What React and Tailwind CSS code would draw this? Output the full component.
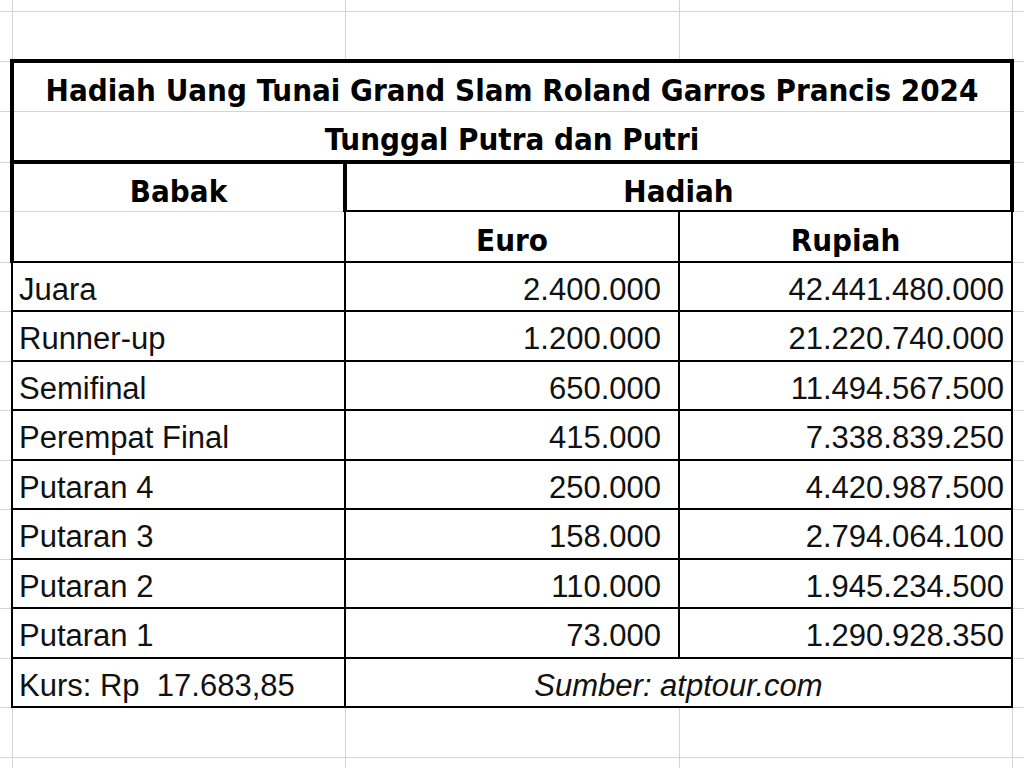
import React from 'react';

const grid = "border border-[#d4d4d4]";
const head = "font-bold text-[31px] text-center text-black pt-[8px]";
const data = "text-[31px] text-[#111] pt-[5px]";
const headFont = { fontFamily: '"DejaVu Sans Condensed", "Open Sans", sans-serif' };

const rows = [
    ["Juara", "2.400.000", "42.441.480.000"],
    ["Runner-up", "1.200.000", "21.220.740.000"],
    ["Semifinal", "650.000", "11.494.567.500"],
    ["Perempat Final", "415.000", "7.338.839.250"],
    ["Putaran 4", "250.000", "4.420.987.500"],
    ["Putaran 3", "158.000", "2.794.064.100"],
    ["Putaran 2", "110.000", "1.945.234.500"],
    ["Putaran 1", "73.000", "1.290.928.350"],
];

const rowHeights = ["h-[49px]", "h-[50px]", "h-[49px]", "h-[50px]", "h-[49px]", "h-[50px]", "h-[49px]", "h-[50px]"];

const EdgeL = () => <td className="border-y border-r border-[#d4d4d4]" />;
const EdgeR = () => <td className="border-y border-l border-[#d4d4d4]" />;

const EmptyRow = ({ h }) => (
    <tr className={h}>
        <EdgeL />
        <td className={grid} />
        <td className={grid} />
        <td className={grid} />
        <EdgeR />
    </tr>
);

const App = () => {
    return (
        <div className="w-[1024px] h-[768px] overflow-hidden bg-white" style={{ fontFamily: '"Liberation Sans", Arial, sans-serif' }}>
            <table className="w-[1024px] table-fixed border-collapse leading-none">
                <colgroup>
                    <col className="w-[12px]" />
                    <col className="w-[333px]" />
                    <col className="w-[334px]" />
                    <col className="w-[333px]" />
                    <col className="w-[12px]" />
                </colgroup>
                <tbody>
                    <tr className="h-[11px]">
                        <td className="border-r border-b border-[#d4d4d4]" />
                        <td className="border-x border-b border-[#d4d4d4]" />
                        <td className="border-x border-b border-[#d4d4d4]" />
                        <td className="border-x border-b border-[#d4d4d4]" />
                        <td className="border-l border-b border-[#d4d4d4]" />
                    </tr>
                    <EmptyRow h="h-[50px]" />

                    <tr className="h-[50px]">
                        <EdgeL />
                        <td colSpan={3} className={`border-t-4 border-x-4 border-b border-t-black border-x-black border-b-[#d4d4d4] ${head}`} style={headFont}>
                            Hadiah Uang Tunai Grand Slam Roland Garros Prancis 2024
                        </td>
                        <EdgeR />
                    </tr>

                    <tr className="h-[51px]">
                        <EdgeL />
                        <td colSpan={3} className={`border-t border-x-4 border-b-4 border-t-[#d4d4d4] border-x-black border-b-black ${head}`} style={headFont}>
                            Tunggal Putra dan Putri
                        </td>
                        <EdgeR />
                    </tr>

                    <tr className="h-[49px]">
                        <EdgeL />
                        <td className={`border-t-4 border-x-4 border-b border-t-black border-x-black border-b-[#d4d4d4] ${head}`} style={headFont}>
                            Babak
                        </td>
                        <td colSpan={2} className={`border-t-4 border-x-4 border-b-2 border-black ${head}`} style={headFont}>
                            Hadiah
                        </td>
                        <EdgeR />
                    </tr>

                    <tr className="h-[51px]">
                        <EdgeL />
                        <td className="border-t border-l-4 border-r-2 border-b-2 border-t-[#d4d4d4] border-l-black border-r-black border-b-black" />
                        <td className={`border-2 border-black ${head}`} style={headFont}>
                            Euro
                        </td>
                        <td className={`border-2 border-black ${head}`} style={headFont}>
                            Rupiah
                        </td>
                        <EdgeR />
                    </tr>

                    {rows.map(([babak, euro, rupiah], i) => (
                        <tr key={babak} className={rowHeights[i]}>
                            <EdgeL />
                            <td className={`border-2 border-black pl-[6px] ${data}`}>{babak}</td>
                            <td className={`border-2 border-black pr-[17px] text-right ${data}`}>{euro}</td>
                            <td className={`border-2 border-black pr-[7px] text-right ${data}`}>{rupiah}</td>
                            <EdgeR />
                        </tr>
                    ))}

                    <tr className="h-[49px]">
                        <EdgeL />
                        <td className={`border-2 border-black pl-[6px] whitespace-pre ${data}`}>Kurs: Rp  17.683,85</td>
                        <td colSpan={2} className={`border-2 border-black text-center italic ${data}`}>Sumber: atptour.com</td>
                        <EdgeR />
                    </tr>

                    <EmptyRow h="h-[50px]" />
                    <tr className="h-[20px]">
                        <td className="border-r border-t border-[#d4d4d4]" />
                        <td className="border-x border-t border-[#d4d4d4]" />
                        <td className="border-x border-t border-[#d4d4d4]" />
                        <td className="border-x border-t border-[#d4d4d4]" />
                        <td className="border-l border-t border-[#d4d4d4]" />
                    </tr>
                </tbody>
            </table>
        </div>
    );
};

export default App;
